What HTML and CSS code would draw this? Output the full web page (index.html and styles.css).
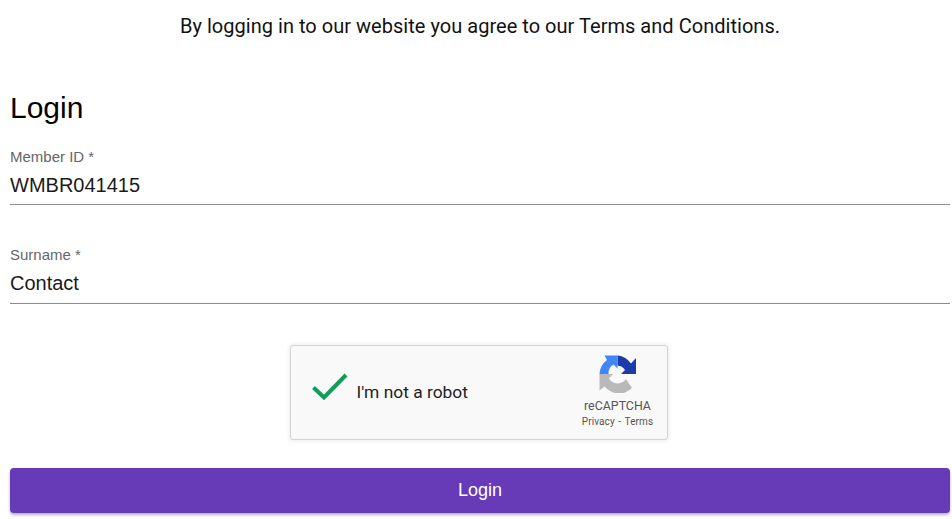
FILE: index.html
```html
<!DOCTYPE html>
<html>
<head>
<title>Login</title>
<link rel="stylesheet" href="styles.css">
</head>
<body>
<p class="notice">By logging in to our website you agree to our Terms and Conditions.</p>
<form class="login-form">
  <h1 class="title">Login</h1>
  <div class="field">
    <label class="field-label" for="member">Member ID *</label>
    <input class="field-input" id="member" value="WMBR041415">
  </div>
  <div class="field field-second">
    <label class="field-label" for="surname">Surname *</label>
    <input class="field-input" id="surname" value="Contact">
  </div>
  <div class="captcha-row">
    <div class="captcha">
      <svg class="captcha-check" width="38" height="30" viewBox="0 0 38 30">
        <path d="M2.5 15.5 L13 25.5 L35 3" fill="none" stroke="#0f9d58" stroke-width="4"/>
      </svg>
      <span class="captcha-text">I'm not a robot</span>
      <div class="captcha-brand">
        <svg class="captcha-logo" width="38" height="38" viewBox="0 0 38 38">
          <path d="M18.5 0.5 A18.5 18.5 0 0 1 32 8.5 L37 3 V19 H22 L26 15 A10 10 0 0 0 18.5 10.5 Z" fill="#1c3aa9"/>
          <path d="M0.5 19 A18.5 18.5 0 0 1 8 5 L5.5 0.5 H18.5 V13.5 L14.5 9.5 A10 10 0 0 0 9.5 19 Z" fill="#4285f4"/>
          <path d="M0.5 19 H14 L10 23.5 A10 10 0 0 0 27 24 L33 33 A18.5 18.5 0 0 1 5.5 31.5 L0.5 35.5 Z" fill="#b9b9b9"/>
        </svg>
        <div class="captcha-name">reCAPTCHA</div>
        <div class="captcha-links">Privacy - Terms</div>
      </div>
    </div>
  </div>
  <button class="submit" type="button">Login</button>
</form>
</body>
</html>
```

FILE: styles.css
```css
html, body {
    margin: 0;
    background: #fff;
    font-family: "Liberation Sans", Arial, sans-serif;
}
body {
    padding: 0 2px 0 10px;
    height: 519px;
    box-sizing: border-box;
    overflow: hidden;
}
.notice {
    margin: 0;
    padding-top: 14px;
    height: 24px;
    line-height: 24px;
    font-family: Roboto, sans-serif;
    font-size: 20px;
    letter-spacing: 0.03px;
    text-align: center;
    color: #111;
}
.title {
    margin: 0;
    padding-top: 52px;
    height: 36px;
    line-height: 36px;
    font-size: 30px;
    font-weight: 400;
    color: #000;
}
.field {
    margin-top: 21px;
    border-bottom: 1px solid #8c8c8c;
    height: 57px;
    display: flex;
    flex-direction: column;
}
.field-second {
    margin-top: 41px;
}
.field-label {
    margin-top: 1px;
    line-height: 18px;
    font-size: 15px;
    color: #666;
}
.field-input {
    border: 0;
    outline: 0;
    padding: 0;
    margin-top: 5px;
    height: 28px;
    background: transparent;
    font-family: inherit;
    font-size: 20px;
    color: #1a1a1a;
}
.field-second .field-label {
    margin-top: 0;
}
.captcha-row {
    display: flex;
    justify-content: center;
    margin-top: 41px;
    padding-right: 3px;
}
.captcha {
    box-sizing: border-box;
    width: 378px;
    height: 95px;
    display: flex;
    align-items: center;
    border: 1px solid #d3d3d3;
    border-radius: 3px;
    background: #f9f9f9;
    box-shadow: 0 0 4px 1px rgba(0, 0, 0, 0.08);
}
.captcha-check {
    margin-left: 20px;
    margin-top: -11px;
}
.captcha-text {
    margin-left: 8px;
    margin-top: -2px;
    font-family: Roboto, sans-serif;
    font-size: 17.4px;
    color: #222;
}
.captcha-brand {
    margin-left: auto;
    width: 96px;
    padding-right: 1px;
    text-align: center;
    color: #555;
    font-family: Roboto, sans-serif;
}
.captcha-logo {
    display: block;
    margin: -1px auto 5px;
}
.captcha-name {
    font-size: 12.4px;
    line-height: 16px;
}
.captcha-links {
    font-size: 10px;
    line-height: 14px;
    margin-top: 1px;
    word-spacing: 1px;
    letter-spacing: 0.1px;
}
.submit {
    display: block;
    width: 100%;
    height: 45px;
    margin-top: 28px;
    border: 0;
    border-radius: 4px;
    background: #673ab7;
    color: #fff;
    font-family: inherit;
    font-size: 18px;
    font-weight: 500;
    box-shadow: 0 2px 3px rgba(0, 0, 0, 0.3);
}
```
